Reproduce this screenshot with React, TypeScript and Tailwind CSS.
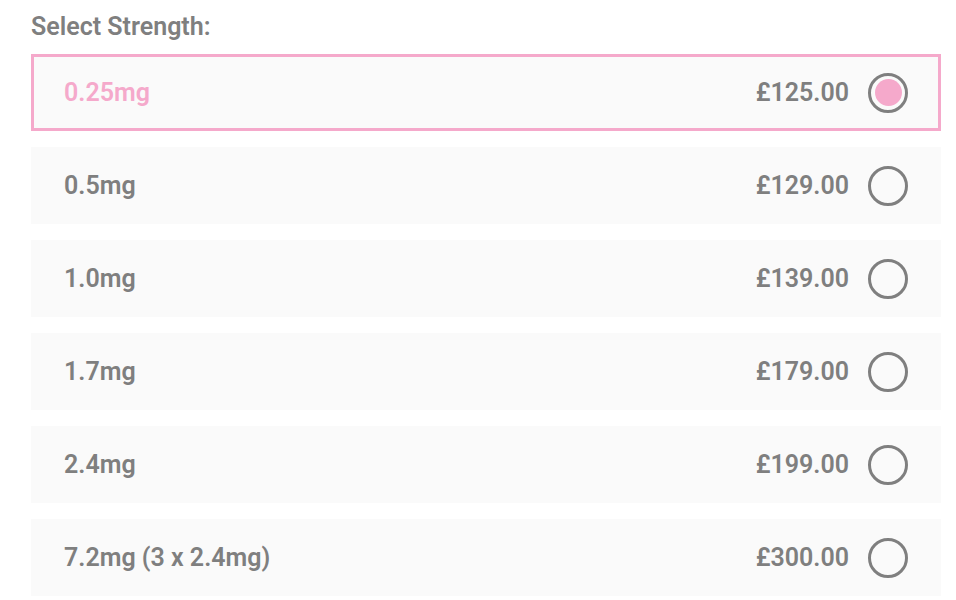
import { useState } from 'react';

const options = [
  { label: '0.25mg', price: '£125.00' },
  { label: '0.5mg', price: '£129.00' },
  { label: '1.0mg', price: '£139.00' },
  { label: '1.7mg', price: '£179.00' },
  { label: '2.4mg', price: '£199.00' },
  { label: '7.2mg (3 x 2.4mg)', price: '£300.00' },
];

export default function App() {
  const [selected, setSelected] = useState(0);

  return (
    <div className="min-h-screen bg-white px-[31px] pt-[12px] font-['Roboto',sans-serif]">
      <div className="text-[25px] font-semibold leading-[30px] text-[#7f7f7f]">Select Strength:</div>
      <div className="mt-[12px] flex w-[910px] flex-col gap-[16px]">
        {options.map((opt, i) => {
          const active = i === selected;
          return (
            <button
              key={opt.label}
              onClick={() => setSelected(i)}
              className={`flex h-[77px] items-center justify-between border-[3px] bg-[#fafafa] pl-[30px] pr-[30px] text-left ${
                active ? 'border-[#f5a9cb]' : 'border-transparent'
              }`}
            >
              <span className={`text-[25px] font-semibold ${active ? 'text-[#f5a9cb]' : 'text-[#7f7f7f]'}`}>
                {opt.label}
              </span>
              <span className="flex items-center gap-[19px]">
                <span className="text-[25px] font-semibold text-[#7f7f7f]">{opt.price}</span>
                <span className="flex h-[40px] w-[40px] items-center justify-center rounded-full border-[3px] border-[#7f7f7f]">
                  {active && <span className="h-[27px] w-[27px] rounded-full bg-[#f5a9cb]" />}
                </span>
              </span>
            </button>
          );
        })}
      </div>
    </div>
  );
}
